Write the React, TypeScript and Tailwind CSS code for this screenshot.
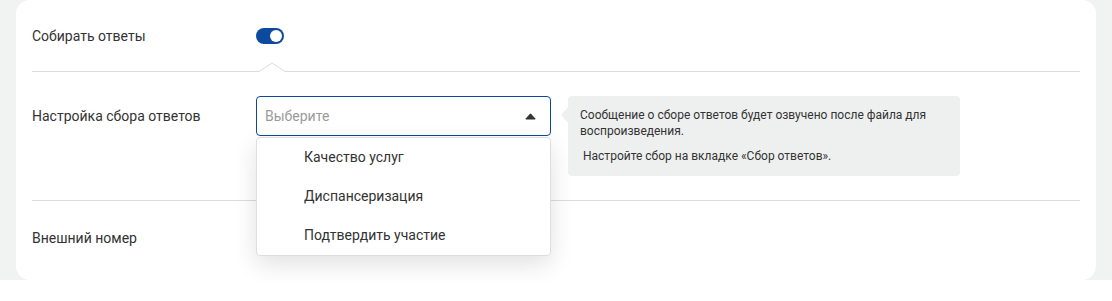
import React from "react";

export default function App() {
  const items = ["Качество услуг", "Диспансеризация", "Подтвердить участие"];
  return (
    <div className="w-[1112px] h-[301px] bg-white" style={{ fontFamily: "Roboto, 'Noto Sans', sans-serif" }}>
      <div className="bg-[#f1f2f2] px-4 h-[280px]">
        <div className="bg-white rounded-[14px] h-[280px] px-4 text-[#333333]">
          {/* Row 1 */}
          <div className="relative flex items-center h-[72px] border-b border-[#dcdcdc]">
            <div className="w-[224px] text-[14px] leading-5">Собирать ответы</div>
            <div className="w-[28px] h-[16px] rounded-full bg-[#0b4a9e] flex items-center justify-end pr-[2px]">
              <div className="w-[12px] h-[12px] rounded-full bg-white" />
            </div>
            <svg className="absolute left-[227px] top-[62px]" width="26" height="11" viewBox="0 0 26 11">
              <path d="M0 10 L13 1 L26 10 Z" fill="white" />
              <path d="M0 9.5 L13 1 L26 9.5" fill="none" stroke="#dcdcdc" strokeWidth="1" />
            </svg>
          </div>
          {/* Row 2 */}
          <div className="flex items-start pt-6 pb-6 border-b border-[#dcdcdc] relative z-10">
            <div className="w-[224px] h-10 flex items-center text-[14px]">Настройка сбора ответов</div>
            <div className="relative w-[295px]">
              <div className="h-10 border border-[#0b4a9e] rounded-[4px] flex items-center justify-between pl-2 pr-[14px]">
                <span className="text-[14px] text-[#9a9a9a]">Выберите</span>
                <svg width="11" height="7" viewBox="0 0 11 7">
                  <path d="M5.5 0.8 L10.2 6 L0.8 6 Z" fill="#333" stroke="#333" strokeWidth="1" strokeLinejoin="round" />
                </svg>
              </div>
              <div className="absolute left-0 top-[41px] w-[295px] bg-white border border-[#dedede] rounded-[4px] shadow-[0_8px_24px_rgba(0,0,0,0.12)]">
                {items.map((t) => (
                  <div key={t} className="h-[39px] flex items-center pl-[47px] text-[14px] text-[#333]">
                    {t}
                  </div>
                ))}
              </div>
            </div>
            <div className="relative ml-[17px] w-[392px] h-[80px] bg-[#eef0f0] rounded-[4px] pl-3 pt-[11px] text-[12px] leading-4 text-[#333]">
              <svg className="absolute left-[-7px] top-[11px]" width="7" height="16" viewBox="0 0 7 16">
                <path d="M7 0 L1 7 Q0 8 1 9 L7 16 Z" fill="#eef0f0" />
              </svg>
              <div>Сообщение о сборе ответов будет озвучено после файла для воспроизведения.</div>
              <div className="mt-[9px] pl-[3px]">Настройте сбор на вкладке «Сбор ответов».</div>
            </div>
          </div>
          {/* Row 3 */}
          <div className="flex items-start pt-[29px]">
            <div className="w-[224px] text-[14px] leading-4">Внешний номер</div>
          </div>
        </div>
      </div>
    </div>
  );
}
